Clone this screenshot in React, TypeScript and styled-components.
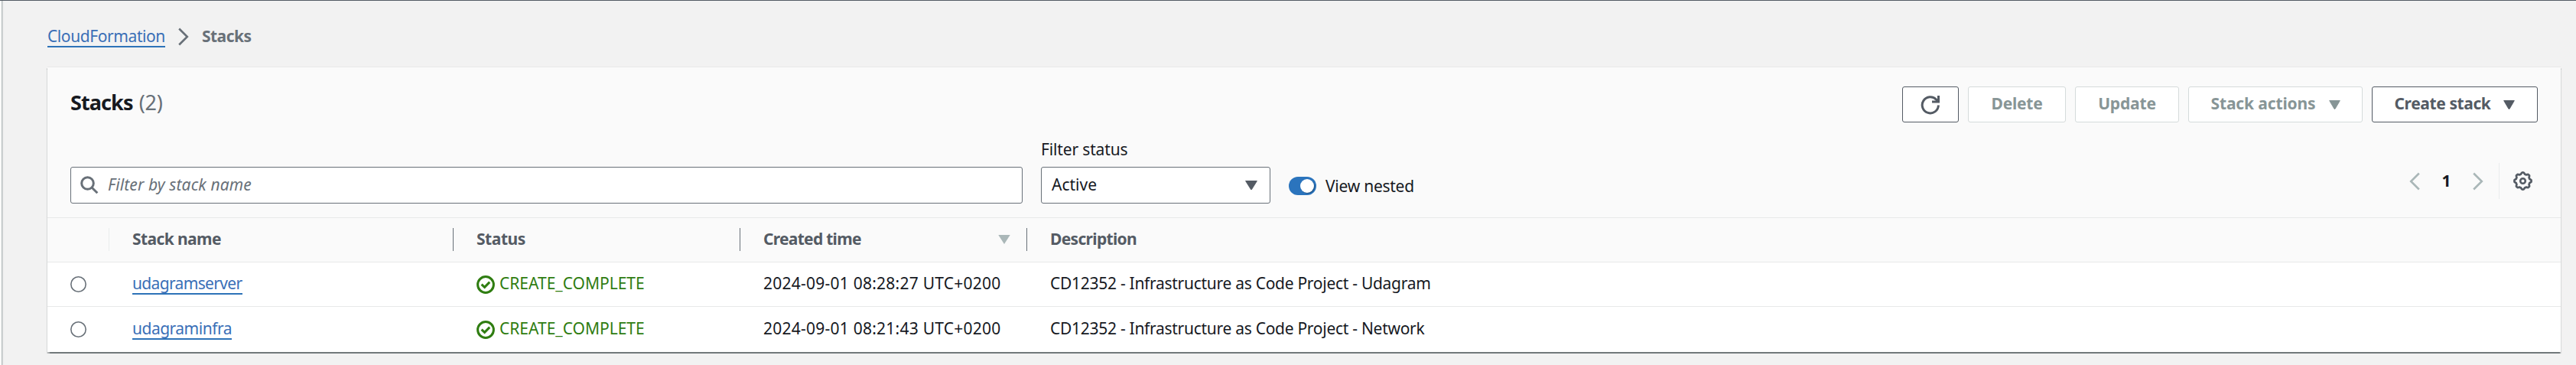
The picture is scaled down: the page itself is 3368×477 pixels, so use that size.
import React from "react";
import styled, { createGlobalStyle } from "styled-components";

const GlobalStyle = createGlobalStyle`
  *, *::before, *::after { box-sizing: border-box; }
  body {
    margin: 0;
    background: #f2f2f2;
    color: #16191f;
    font-family: "Noto Sans", "Open Sans", sans-serif;
    font-size: 21px;
    line-height: 26px;
  }
  svg { display: block; flex: none; }
`;

const Page = styled.div`
  height: 477px;
  display: flex;
  border-top: 1px solid #545b64;
`;

const NavEdge = styled.div`
  width: 3px;
  flex: none;
  background: #fafafa;
  border-right: 1px solid #b4bcbd;
  box-shadow: 1px 0 1px rgba(0, 28, 36, 0.12);
`;

const Main = styled.main`
  flex: 1;
  padding: 33px 20px 0 59px;
`;

const Text = styled.span<{ $track?: number }>`
  white-space: nowrap;
  letter-spacing: ${(p) => p.$track ?? 0}px;
`;

const Link = styled.a<{ $track: number }>`
  display: inline-block;
  color: #3a6fb7;
  border-bottom: 2px solid #2e73b8;
  white-space: nowrap;
  letter-spacing: ${(p) => p.$track}px;
`;

const Breadcrumbs = styled.nav`
  display: flex;
  align-items: flex-start;
  height: 53px;
  svg { margin: 2px 17px 0 17px; }
`;

const Current = styled(Text)`
  font-weight: 700;
  color: #687078;
`;

const Panel = styled.section`
  height: 373px;
  background: #fff;
  border-top: 1px solid #e8e9e9;
  box-shadow: 0 1.5px 1px rgba(20, 32, 36, 0.42), 1px 1.5px 1px rgba(20, 32, 36, 0.14),
    -1px 1.5px 1px rgba(20, 32, 36, 0.14);
`;

const PanelTop = styled.header`
  height: 197px;
  background: #fafafa;
  border-bottom: 1px solid #e8e9e9;
  padding: 25px 30px 0;
`;

const TitleRow = styled.div`
  display: flex;
  justify-content: space-between;
  height: 47px;
`;

const Title = styled.h1`
  margin: 0;
  font-size: 27px;
  line-height: 41px;
  letter-spacing: -0.9px;
`;

const Count = styled.span`
  margin-left: 2px;
  font-weight: 400;
  color: #687078;
  letter-spacing: -0.2px;
`;

const Actions = styled.div`
  display: flex;
  gap: 12px;
`;

const Button = styled.button<{ $width: number; $track?: number }>`
  width: ${(p) => p.$width}px;
  height: 47px;
  padding: 0 0 3px;
  display: flex;
  align-items: center;
  justify-content: center;
  gap: 17px;
  font: inherit;
  font-weight: 700;
  white-space: nowrap;
  letter-spacing: ${(p) => p.$track ?? 0}px;
  color: #545b64;
  background: #fff;
  border: 1px solid #545b64;
  border-radius: 3px;
  svg { margin-top: 4px; }
  &:disabled {
    color: #879596;
    border-color: #d5dbdb;
  }
`;

const FilterRow = styled.div`
  display: flex;
  align-items: flex-end;
  height: 106px;
`;

const Field = styled.div`
  display: flex;
  align-items: center;
  height: 48px;
  background: #fff;
  border: 1px solid #687078;
  border-radius: 3px;
`;

const Search = styled(Field)`
  width: 1245px;
  padding-left: 12px;
  gap: 12px;
`;

const Placeholder = styled(Text)`
  font-style: italic;
  color: #687078;
  padding-bottom: 2px;
`;

const StatusFilter = styled.label`
  width: 300px;
  margin-left: 24px;
  display: flex;
  flex-direction: column;
  gap: 10px;
`;

const Select = styled(Field)`
  justify-content: space-between;
  padding: 0 16px 0 13px;
  svg { color: #545b64; }
  ${Text} { padding-bottom: 3px; }
`;

const ToggleGroup = styled.div`
  display: flex;
  align-items: center;
  gap: 12px;
  height: 24px;
  margin: 0 auto 11px 24px;
  ${Text} { padding-bottom: 1px; }
`;

const Track = styled.span`
  width: 36px;
  height: 24px;
  padding: 3px;
  display: flex;
  justify-content: flex-end;
  border-radius: 12px;
  background: #2b74bd;
`;

const Knob = styled.span`
  width: 18px;
  height: 18px;
  border-radius: 50%;
  background: #fff;
  box-shadow: 1px 1px 1px rgba(0, 0, 0, 0.3);
`;

const Pager = styled.div`
  display: flex;
  align-items: center;
  height: 47px;
  margin: 0 7px 6px 0;
`;

const PageNumber = styled.span`
  width: 69px;
  text-align: center;
  font-weight: 700;
  padding-bottom: 2px;
`;

const Rule = styled.span`
  width: 1px;
  height: 47px;
  margin: 0 18px 0 20px;
  background: #e9ebed;
`;

const Grid = styled.div`
  display: grid;
  grid-template-columns: 81px 450px 375px 375px 1fr;
`;

const HeadRow = styled(Grid)`
  height: 58px;
  background: #fafafa;
  border-bottom: 1px solid #e8e9e9;
  padding-top: 13px;
`;

const HeadCell = styled.div<{ $line?: string }>`
  height: 30px;
  padding: 0 21px 0 30px;
  display: flex;
  align-items: center;
  justify-content: space-between;
  font-weight: 700;
  color: #545b64;
  border-right: 1px solid ${(p) => p.$line ?? "transparent"};
  ${Text} { padding-bottom: 2px; }
`;

const Row = styled(Grid)<{ $last: boolean }>`
  height: ${(p) => (p.$last ? 59 : 58)}px;
  padding-top: ${(p) => (p.$last ? 15 : 14)}px;
  border-bottom: ${(p) => (p.$last ? "none" : "1px solid #e8e9e9")};
`;

const Cell = styled.div`
  padding-left: 30px;
  display: flex;
  align-items: flex-start;
`;

const Radio = styled.span`
  width: 21px;
  height: 21px;
  margin-top: 4px;
  border-radius: 50%;
  background: #fff;
  box-shadow: inset 0 0 0 1.6px #687078;
`;

const Status = styled(Cell)`
  color: #2f7d11;
  gap: 6px;
  svg { margin-top: 3px; }
`;

const Caret = ({ width = 15 }: { width?: number }) => (
  <svg width={width} height="12" viewBox="0 0 15 12" preserveAspectRatio="none">
    <path d="M.7 .5H14.3L8 11.3Q7.5 11.9 7 11.3Z" fill="currentColor" stroke="currentColor" strokeLinejoin="round" />
  </svg>
);

const Chevron = ({ left, color }: { left?: boolean; color: string }) => (
  <svg width="14" height="24" viewBox="0 0 14 24" fill="none" stroke={color} strokeWidth="2.6">
    <path d={left ? "M12.8 1.5L2.2 12L12.8 22.5" : "M1.2 1.5L11.8 12L1.2 22.5"} />
  </svg>
);

const SearchIcon = () => (
  <svg width="24" height="24" viewBox="0 0 24 24" fill="none" stroke="#687078" strokeWidth="3">
    <circle cx="9.5" cy="9.5" r="7.8" />
    <path d="M15 15L22.3 22.3" />
  </svg>
);

const RefreshIcon = () => (
  <svg width="26" height="26" viewBox="0 0 26 26" fill="none" stroke="#545b64" strokeWidth="3">
    <path d="M23.4 13.5A10.6 10.6 0 1 1 20.7 6.2L22.5 8.2" />
    <path d="M23.5 1V9H15" />
  </svg>
);

const CheckIcon = () => (
  <svg width="24" height="24" viewBox="0 0 24 24" fill="none" stroke="#2f7d11" strokeWidth="3">
    <circle cx="12" cy="12" r="10.4" />
    <path d="M6.6 11.6L10.6 15.4L17.2 8.6" />
  </svg>
);

const gearOutline = Array.from({ length: 64 }, (_, i) => {
  const a = (i / 64) * Math.PI * 2;
  const wave = Math.max(-1, Math.min(1, Math.cos(a * 8) * 1.6));
  const r = 10.1 + wave * 0.95;
  return `${(12.5 + r * Math.cos(a)).toFixed(2)},${(12.5 + r * Math.sin(a)).toFixed(2)}`;
}).join(" ");

const GearIcon = () => (
  <svg width="25" height="25" viewBox="0 0 25 25" fill="none" stroke="#545b64" strokeLinejoin="round">
    <polygon points={gearOutline} strokeWidth="2.7" />
    <circle cx="12.5" cy="12.5" r="3.3" strokeWidth="2.6" />
  </svg>
);

const stacks = [
  { name: "udagramserver", track: -0.65, created: "2024-09-01 08:28:27 UTC+0200", description: "CD12352 - Infrastructure as Code Project - Udagram" },
  { name: "udagraminfra", track: -0.5, created: "2024-09-01 08:21:43 UTC+0200", description: "CD12352 - Infrastructure as Code Project - Network" },
];

export default function App() {
  return (
    <>
      <GlobalStyle />
      <Page>
        <NavEdge />
        <Main>
          <Breadcrumbs>
            <Link $track={-0.41}>CloudFormation</Link>
            <Chevron color="#687078" />
            <Current $track={-0.5}>Stacks</Current>
          </Breadcrumbs>
          <Panel>
            <PanelTop>
              <TitleRow>
                <Title>
                  Stacks <Count>(2)</Count>
                </Title>
                <Actions>
                  <Button $width={74} aria-label="Refresh"><RefreshIcon /></Button>
                  <Button $width={128} $track={-0.25} disabled>Delete</Button>
                  <Button $width={136} $track={-0.15} disabled>Update</Button>
                  <Button $width={228} $track={-0.13} disabled>Stack actions<Caret /></Button>
                  <Button $width={217} $track={-0.4}>Create stack<Caret /></Button>
                </Actions>
              </TitleRow>
              <FilterRow>
                <Search>
                  <SearchIcon />
                  <Placeholder $track={0.12}>Filter by stack name</Placeholder>
                </Search>
                <StatusFilter>
                  <Text $track={-0.15}>Filter status</Text>
                  <Select>
                    <Text>Active</Text>
                    <Caret width={16} />
                  </Select>
                </StatusFilter>
                <ToggleGroup>
                  <Track><Knob /></Track>
                  <Text $track={-0.25}>View nested</Text>
                </ToggleGroup>
                <Pager>
                  <Chevron left color="#aab7b8" />
                  <PageNumber>1</PageNumber>
                  <Chevron color="#aab7b8" />
                  <Rule />
                  <GearIcon />
                </Pager>
              </FilterRow>
            </PanelTop>
            <HeadRow>
              <HeadCell $line="#eaeded" />
              <HeadCell $line="#687078"><Text $track={-0.6}>Stack name</Text></HeadCell>
              <HeadCell $line="#687078"><Text $track={-0.45}>Status</Text></HeadCell>
              <HeadCell $line="#687078">
                <Text $track={-0.72}>Created time</Text>
                <svg width="16" height="12" viewBox="0 0 16 12"><path d="M.3 0H15.7L8 12Z" fill="#aab7b8" /></svg>
              </HeadCell>
              <HeadCell><Text $track={-0.67}>Description</Text></HeadCell>
            </HeadRow>
            {stacks.map((s, i) => (
              <Row key={s.name} $last={i === stacks.length - 1}>
                <Cell><Radio /></Cell>
                <Cell><Link $track={s.track}>{s.name}</Link></Cell>
                <Status><CheckIcon /><Text>CREATE_COMPLETE</Text></Status>
                <Cell><Text $track={0.24}>{s.created}</Text></Cell>
                <Cell><Text $track={-0.28}>{s.description}</Text></Cell>
              </Row>
            ))}
          </Panel>
        </Main>
      </Page>
    </>
  );
}
